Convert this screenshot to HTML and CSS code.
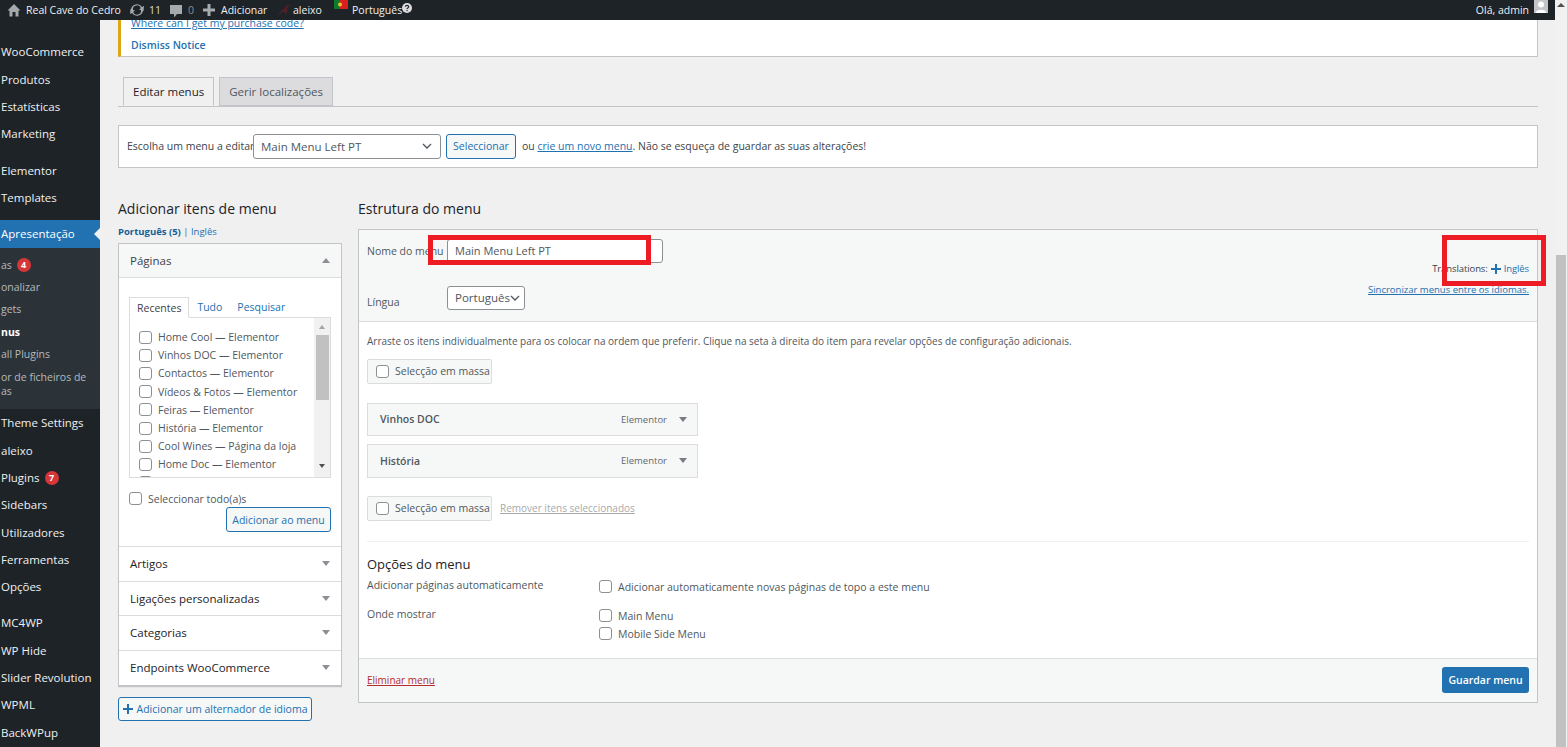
FILE: index.html
```html
<!DOCTYPE html>
<html lang="pt">
<head>
<meta charset="utf-8">
<title>Menus</title>
<link rel="stylesheet" href="styles.css">
</head>
<body>
<div class="page">
  <div class="viewport">
    <header class="adminbar">
      <svg class="ab-home" viewBox="0 0 14 14"><path d="M7 1 L0.5 7.5 L2.5 7.5 L2.5 13.5 L5.5 13.5 L5.5 9 L8.5 9 L8.5 13.5 L11.5 13.5 L11.5 7.5 L13.5 7.5 Z" fill="#a7aaad"/></svg>
      <span class="ab-site">Real Cave do Cedro</span>
      <svg class="ab-upd" viewBox="0 0 14 14"><path d="M1 7 A6 6 0 0 1 12 4 L14 3 L13.5 8 L9 6.5 L10.8 5.3 A4 4 0 0 0 3 7 Z M13 7 A6 6 0 0 1 2 10 L0 11 L0.5 6 L5 7.5 L3.2 8.7 A4 4 0 0 0 11 7 Z" fill="#a7aaad"/></svg>
      <span class="ab-count">11</span>
      <svg class="ab-com" viewBox="0 0 14 14"><path d="M1 1 H13 V10 H8 L5 13.5 V10 H1 Z" fill="#a7aaad"/></svg>
      <span class="ab-zero">0</span>
      <svg class="ab-plus" viewBox="0 0 12 12"><path d="M4.5 0 H7.5 V4.5 H12 V7.5 H7.5 V12 H4.5 V7.5 H0 V4.5 H4.5 Z" fill="#a7aaad"/></svg>
      <span class="ab-add">Adicionar</span>
      <svg class="ab-logo" viewBox="0 0 14 12"><path d="M1 11 C4 9 8 4 11 1 C10 4 9 8 9 11 M4 7 H11 M11 1 C12 1 13 1 14 0" fill="none" stroke="#7c1f27" stroke-width="1"/></svg>
      <span class="ab-user">aleixo</span>
      <svg class="ab-flag" viewBox="0 0 14 9"><rect width="6" height="9" fill="#0a7a2c"/><rect x="6" width="8" height="9" fill="#d9201f"/><circle cx="6" cy="4.5" r="2" fill="#e8c22c"/></svg>
      <span class="ab-lang">Português</span>
      <svg class="ab-help" viewBox="0 0 10 10"><circle cx="5" cy="5" r="5" fill="#dcdcde"/><path d="M3.4 3.8 C3.4 2 6.7 2 6.7 3.8 C6.7 5 5 4.8 5 6.1" fill="none" stroke="#1d2327" stroke-width="1.2"/><rect x="4.4" y="6.9" width="1.2" height="1.2" fill="#1d2327"/></svg>
      <span class="ab-hello">Olá, admin</span>
      <svg class="ab-avatar" viewBox="0 0 14 13"><rect width="14" height="13" fill="#c3c4c7"/><circle cx="7" cy="4.5" r="3" fill="#fff"/><path d="M1.5 13 C2 8.5 12 8.5 12.5 13 Z" fill="#fff"/></svg>
    </header>

    <div class="workspace">
      <nav class="sidebar">
        <ul class="nav">
          <li>WooCommerce</li>
          <li>Produtos</li>
          <li>Estatísticas</li>
          <li class="sep">Marketing</li>
          <li>Elementor</li>
          <li class="sep">Templates</li>
          <li class="current">Apresentação</li>
        </ul>
        <ul class="subnav">
          <li class="sub-first">as <span class="badge">4</span></li>
          <li>onalizar</li>
          <li>gets</li>
          <li class="sub-on">nus</li>
          <li>all Plugins</li>
          <li>or de ficheiros de<br>as</li>
        </ul>
        <ul class="nav">
          <li>Theme Settings</li>
          <li>aleixo</li>
          <li>Plugins <span class="badge">7</span></li>
          <li>Sidebars</li>
          <li>Utilizadores</li>
          <li>Ferramentas</li>
          <li class="sep">Opções</li>
          <li>MC4WP</li>
          <li>WP Hide</li>
          <li>Slider Revolution</li>
          <li>WPML</li>
          <li>BackWPup</li>
        </ul>
      </nav>

      <main class="content">
        <section class="notice">
          <a class="notice-link">Where can I get my purchase code?</a>
          <a class="notice-dismiss">Dismiss Notice</a>
        </section>

        <div class="tabs">
          <span class="tab tab-on">Editar menus</span>
          <span class="tab">Gerir localizações</span>
        </div>

        <section class="manage">
          <span class="manage-label">Escolha um menu a editar:</span>
          <div class="select select-menu"><span>Main Menu Left PT</span><svg class="chev" viewBox="0 0 10 6"><path d="M1 1 L5 5 L9 1" fill="none" stroke="#50575e" stroke-width="1.3"/></svg></div>
          <span class="btn btn-select">Seleccionar</span>
          <span class="manage-after">ou <a class="link">crie um novo menu</a>. Não se esqueça de guardar as suas alterações!</span>
        </section>

        <div class="columns">
          <aside class="col-left">
            <h2 class="heading">Adicionar itens de menu</h2>
            <p class="lang-links"><b>Português (5)</b> | <a>Inglês</a></p>
            <div class="accordion">
              <div class="acc-head acc-open"><span>Páginas</span><i class="arrow-up"></i></div>
              <div class="acc-body">
                <div class="mini-tabs">
                  <span class="mini-tab mini-on">Recentes</span>
                  <span class="mini-tab">Tudo</span>
                  <span class="mini-tab">Pesquisar</span>
                </div>
                <div class="checklist">
                  <ul class="checks">
                    <li><input type="checkbox" class="cb">Home Cool — Elementor</li>
                    <li><input type="checkbox" class="cb">Vinhos DOC — Elementor</li>
                    <li><input type="checkbox" class="cb">Contactos — Elementor</li>
                    <li><input type="checkbox" class="cb">Vídeos &amp; Fotos — Elementor</li>
                    <li><input type="checkbox" class="cb">Feiras — Elementor</li>
                    <li><input type="checkbox" class="cb">História — Elementor</li>
                    <li><input type="checkbox" class="cb">Cool Wines — Página da loja</li>
                    <li><input type="checkbox" class="cb">Home Doc — Elementor</li>
                    <li><input type="checkbox" class="cb"></li>
                  </ul>
                  <div class="mini-scroll">
                    <i class="ms-up"></i>
                    <i class="ms-thumb"></i>
                    <i class="ms-down"></i>
                  </div>
                </div>
                <label class="select-all"><input type="checkbox" class="cb">Seleccionar todo(a)s</label>
                <div class="add-row"><span class="btn btn-add">Adicionar ao menu</span></div>
              </div>
              <div class="acc-head"><span>Artigos</span><i class="arrow-down"></i></div>
              <div class="acc-head"><span>Ligações personalizadas</span><i class="arrow-down"></i></div>
              <div class="acc-head"><span>Categorias</span><i class="arrow-down"></i></div>
              <div class="acc-head acc-last"><span>Endpoints WooCommerce</span><i class="arrow-down"></i></div>
            </div>
            <span class="btn btn-switcher"><svg class="plus" viewBox="0 0 10 10"><path d="M4 0 H6 V4 H10 V6 H6 V10 H4 V6 H0 V4 H4 Z" fill="#2271b1"/></svg>Adicionar um alternador de idioma</span>
          </aside>

          <section class="col-right">
            <h2 class="heading">Estrutura do menu</h2>
            <div class="panel">
              <div class="panel-head">
                <div class="head-fields">
                  <div class="field-row"><span class="field-label">Nome do menu</span><div class="name-input">Main Menu Left PT</div></div>
                  <div class="field-row field-lang"><span class="field-label field-label-lang">Língua</span><div class="select select-lang"><span>Português</span><svg class="chev" viewBox="0 0 10 6"><path d="M1 1 L5 5 L9 1" fill="none" stroke="#50575e" stroke-width="1.3"/></svg></div></div>
                </div>
                <div class="head-side">
                  <p class="translations">Translations: <svg class="plus" viewBox="0 0 10 10"><path d="M4 0 H6 V4 H10 V6 H6 V10 H4 V6 H0 V4 H4 Z" fill="#2271b1"/></svg> <a>Inglês</a></p>
                  <a class="link sync">Sincronizar menus entre os idiomas.</a>
                </div>
              </div>
              <div class="panel-body">
                <p class="hint">Arraste os itens individualmente para os colocar na ordem que preferir. Clique na seta à direita do item para revelar opções de configuração adicionais.</p>
                <label class="bulk"><input type="checkbox" class="cb">Selecção em massa</label>
                <div class="menu-item item-a"><b>Vinhos DOC</b><span class="item-type">Elementor</span><i class="arrow-down arrow-dark"></i></div>
                <div class="menu-item"><b>História</b><span class="item-type">Elementor</span><i class="arrow-down arrow-dark"></i></div>
                <div class="bulk-row">
                  <label class="bulk"><input type="checkbox" class="cb">Selecção em massa</label>
                  <a class="remove">Remover itens seleccionados</a>
                </div>
                <div class="options">
                  <h3 class="options-title">Opções do menu</h3>
                  <div class="opt-row">
                    <span class="opt-label">Adicionar páginas automaticamente</span>
                    <label class="opt-check"><input type="checkbox" class="cb">Adicionar automaticamente novas páginas de topo a este menu</label>
                  </div>
                  <div class="opt-row opt-row-2">
                    <span class="opt-label">Onde mostrar</span>
                    <div class="opt-stack">
                      <label class="opt-check"><input type="checkbox" class="cb">Main Menu</label>
                      <label class="opt-check"><input type="checkbox" class="cb">Mobile Side Menu</label>
                    </div>
                  </div>
                </div>
              </div>
              <div class="panel-foot">
                <a class="delete">Eliminar menu</a>
                <span class="btn-primary">Guardar menu</span>
              </div>
            </div>
          </section>
        </div>
      </main>
    </div>

    <div class="mark mark-name"></div>
    <div class="mark mark-trans"></div>
  </div>

  <div class="scrollbar">
    <i class="sb-up"></i>
    <i class="sb-thumb"></i>
  </div>
</div>
</body>
</html>
```

FILE: styles.css
```css
* { box-sizing: border-box; }
html, body { margin: 0; padding: 0; height: 100%; overflow: hidden; }
body { font-family: "Open Sans", "Noto Sans", sans-serif; font-size: 11px; color: #3c434a; background: #f0f0f1; }
ul { list-style: none; margin: 0; padding: 0; }
p, h2, h3 { margin: 0; }
a { color: #2271b1; }
.page { display: flex; width: 1567px; height: 747px; }
.viewport { position: relative; width: 1555px; height: 747px; display: flex; flex-direction: column; overflow: hidden; }

/* admin bar */
.adminbar { height: 20px; flex: none; background: #1d2327; color: #f0f0f1; display: flex; align-items: center; font-size: 10.5px; line-height: 20px; padding-left: 7px; position: relative; z-index: 2; }
.ab-home { width: 14px; height: 14px; }
.ab-site { margin-left: 5px; width: 104px; white-space: nowrap; }
.ab-upd { width: 14px; height: 14px; }
.ab-count { margin-left: 5px; width: 20px; color: #dcdcde; }
.ab-com { width: 14px; height: 14px; margin-top: 1px; }
.ab-zero { margin-left: 5px; width: 15px; color: #8c8f94; }
.ab-plus { width: 12px; height: 12px; }
.ab-add { margin-left: 6px; width: 57px; }
.ab-logo { width: 12px; height: 10px; }
.ab-user { margin-left: 3px; width: 41px; }
.ab-flag { width: 14px; height: 9px; align-self: flex-start; }
.ab-lang { margin-left: 4px; width: 50px; }
.ab-help { width: 10px; height: 10px; margin-bottom: 5px; }
.ab-hello { margin-left: auto; white-space: nowrap; }
.ab-avatar { width: 14px; height: 13px; margin: 0 7px 7px 5px; }

.workspace { flex: 1; display: flex; min-height: 0; }

/* sidebar */
.sidebar { width: 100px; flex: none; background: #1d2327; color: #f0f0f1; padding-top: 18.4px; overflow: hidden; font-size: 11.5px; }
.nav li { line-height: 27.3px; height: 27.3px; padding-left: 1px; white-space: nowrap; }
.nav li.sep { margin-bottom: 9px; }
.nav li.current { background: #2271b1; color: #fff; position: relative; height: 27.4px; }
.nav li.current::after { content: ""; position: absolute; right: 0; top: 8px; border: 6px solid transparent; border-right-color: #f0f0f1; border-left-width: 0; }
.subnav { background: #2c3338; color: #b4b9be; padding: 6px 0 7px; font-size: 10.5px; }
.subnav li { padding: 4px 0 4px 1px; line-height: 14.4px; }
.subnav .sub-on { color: #fff; font-weight: 700; }
.badge { display: inline-block; width: 14px; height: 14px; border-radius: 50%; background: #d63638; color: #fff; font-size: 9px; line-height: 14px; text-align: center; font-weight: 700; margin-left: 2px; vertical-align: 1px; }

/* main */
.content { flex: 1; min-width: 0; padding: 0 17px 0 18px; font-size: 10.5px; }
.notice { height: 36.5px; background: #fff; border: 1px solid #c3c4c7; border-top: 0; border-left: 3px solid #dba617; padding-left: 10px; display: flex; flex-direction: column; overflow: hidden; }
.notice-link { text-decoration: underline; line-height: 14px; margin-top: -4.5px; }
.notice-dismiss { font-weight: 600; margin-top: 8px; line-height: 14px; }

.tabs { margin-top: 20.5px; height: 29.5px; border-bottom: 1px solid #c3c4c7; padding-left: 5px; display: flex; gap: 5px; }
.tab { height: 29px; padding: 0 9px; border: 1px solid #c3c4c7; background: #dcdcde; color: #50575e; line-height: 27px; font-size: 11.5px; font-weight: 500; }
.tab-on { background: #f0f0f1; color: #1d2327; border-bottom-color: #f0f0f1; }

.manage { margin-top: 18px; height: 43px; background: #fff; border: 1px solid #c3c4c7; display: flex; align-items: center; padding-left: 8px; }
.manage-label { width: 126px; white-space: nowrap; }
.select { background: #fff; border: 1px solid #8c8f94; border-radius: 3px; display: flex; align-items: center; justify-content: space-between; color: #50575e; font-size: 11.5px; }
.select-menu { width: 188px; height: 25px; padding: 0 8px 0 7px; }
.chev { width: 10px; height: 6px; flex: none; }
.btn { border: 1px solid #2271b1; border-radius: 3px; background: #f6f7f7; color: #2271b1; display: inline-flex; align-items: center; justify-content: center; white-space: nowrap; }
.btn-select { margin-left: 5px; width: 70px; height: 25px; }
.manage-after { margin-left: 6px; white-space: nowrap; }
.link { text-decoration: underline; }

.columns { display: flex; margin-top: 31px; gap: 16px; }
.col-left { width: 224px; flex: none; }
.col-right { flex: 1; min-width: 0; }
.heading { font-size: 14px; font-weight: 500; color: #1d2327; line-height: 20px; height: 20px; }

.lang-links { margin-top: 6px; line-height: 14px; font-size: 9.5px; color: #50575e; }
.lang-links b { color: #135e96; font-weight: 700; }
.accordion { margin-top: 4px; border: 1px solid #c3c4c7; background: #fff; box-shadow: 0 1px 1px rgba(0,0,0,.04); }
.acc-head { height: 34.5px; padding: 0 11px 0 11px; display: flex; align-items: center; justify-content: space-between; font-size: 11.5px; font-weight: 500; color: #1d2327; border-bottom: 1px solid #dcdcde; }
.acc-open { background: #f6f7f7; color: #3c434a; }
.acc-last { border-bottom: 0; height: 36px; border-bottom: 2px solid #c3c4c7; margin-bottom: -1px; }
.arrow-up { width: 0; height: 0; border: 4px solid transparent; border-top: 0; border-bottom: 5px solid #8c8f94; margin-right: 0; }
.arrow-down { width: 0; height: 0; border: 4px solid transparent; border-bottom: 0; border-top: 5px solid #8c8f94; }
.arrow-dark { border-top-color: #787c82; }
.acc-body { padding: 19px 10px 0; height: 269px; border-bottom: 1px solid #dcdcde; }
.mini-tabs { display: flex; height: 21px; position: relative; z-index: 1; }
.mini-tab { padding: 0 7px; line-height: 21px; color: #2271b1; font-size: 10.5px; margin-right: 1px; }
.mini-on { border: 1px solid #dcdcde; border-bottom: 1px solid #fff; color: #3c434a; line-height: 20px; background: #fff; }
.checklist { height: 161px; border: 1px solid #dcdcde; margin-top: -1px; display: flex; overflow: hidden; }
.checks { flex: 1; padding: 10px 0 0 9px; }
.checks li { display: flex; align-items: center; height: 18.2px; white-space: nowrap; color: #50575e; }
.cb { appearance: none; -webkit-appearance: none; width: 13px; height: 13px; margin: 0 6px 0 0; border: 1px solid #8c8f94; border-radius: 3px; background: #fff; flex: none; }
.mini-scroll { width: 16px; background: #f1f1f1; position: relative; display: flex; flex-direction: column; align-items: center; flex: none; }
.ms-up { width: 0; height: 0; margin-top: 7px; border: 3.5px solid transparent; border-top: 0; border-bottom: 4px solid #a3a3a3; }
.ms-thumb { width: 13px; height: 65px; margin-top: 6px; background: #c1c1c1; }
.ms-down { width: 0; height: 0; margin-top: 64px; border: 3.5px solid transparent; border-bottom: 0; border-top: 4px solid #505050; }
.select-all { display: flex; align-items: center; margin-top: 14px; height: 13px; color: #50575e; }
.add-row { display: flex; justify-content: flex-end; margin-top: 2px; }
.btn-add { width: 105px; height: 25px; }
.btn-switcher { margin-top: 10px; width: 194px; height: 24px; gap: 4px; }
.plus { width: 10px; height: 10px; flex: none; }

/* right panel */
.panel { margin-top: 10px; border: 1px solid #c3c4c7; background: #fff; }
.panel-head { height: 92px; background: #f6f7f7; border-bottom: 1px solid #dcdcde; display: flex; justify-content: space-between; padding: 9px 8px 0 8px; }
.field-row { display: flex; align-items: center; height: 24px; }
.field-label { width: 80px; white-space: nowrap; color: #50575e; }
.field-label-lang { padding-top: 8px; }
.name-input { width: 216px; height: 24px; border: 1px solid #8c8f94; border-radius: 3px; background: #fff; padding-left: 7px; line-height: 22px; color: #50575e; font-size: 11px; }
.field-lang { margin-top: 23px; }
.select-lang { width: 78px; height: 24px; padding: 0 4px 0 7px; }
.head-side { display: flex; flex-direction: column; align-items: flex-end; padding-top: 23px; }
.translations { line-height: 14px; font-size: 9.5px; display: flex; align-items: center; gap: 3px; letter-spacing: -.1px; }
.sync { margin-top: 7px; line-height: 14px; font-size: 9.5px; white-space: nowrap; }
.panel-body { padding: 12px 8px 0 8px; }
.hint { line-height: 14px; white-space: nowrap; font-size: 10px; color: #50575e; }
.bulk { width: 125px; height: 25px; border: 1px solid #dcdcde; border-radius: 2px; background: #f6f7f7; display: flex; align-items: center; padding-left: 8px; color: #50575e; white-space: nowrap; flex: none; }
.panel-body > .bulk { margin-top: 11px; }
.menu-item { width: 331px; height: 34px; border: 1px solid #dcdcde; background: #f6f7f7; display: flex; align-items: center; padding: 0 10px 0 12px; margin-top: 8px; }
.item-a { margin-top: 19px; height: 33px; }
.menu-item b { flex: 1; font-weight: 600; color: #50575e; }
.item-type { color: #646970; font-size: 9.5px; margin-right: 12px; }
.bulk-row { display: flex; align-items: center; margin-top: 18px; gap: 8px; }
.remove { color: #a7aaad; text-decoration: underline; font-size: 10px; white-space: nowrap; }
.options { margin-top: 20px; border-top: 1px solid #f0f0f1; padding: 12px 0 15px; }
.options-title { font-size: 13px; font-weight: 500; color: #1d2327; line-height: 20px; }
.opt-row { display: flex; align-items: flex-start; margin-top: 4px; }
.opt-row-2 { margin-top: 11px; }
.opt-label { width: 232px; flex: none; color: #50575e; line-height: 14px; }
.opt-check { display: flex; align-items: center; height: 18px; color: #50575e; white-space: nowrap; }
.opt-stack { display: flex; flex-direction: column; }
.panel-foot { height: 44px; background: #f6f7f7; border-top: 1px solid #dcdcde; display: flex; align-items: center; justify-content: space-between; padding: 0 8px; }
.delete { color: #b32d2e; text-decoration: underline; font-size: 10px; }
.btn-primary { width: 87px; height: 26px; background: #2271b1; color: #fff; border-radius: 3px; display: flex; align-items: center; justify-content: center; font-weight: 600; }

/* annotation rectangles on top of the screenshot */
.mark { position: absolute; border: 5px solid #ed1c24; pointer-events: none; z-index: 3; }
.mark-name { left: 428px; top: 235px; width: 223px; height: 30px; }
.mark-trans { left: 1442px; top: 235px; width: 104px; height: 51px; }

/* page scrollbar */
.scrollbar { width: 12px; height: 747px; background: #f1f1f1; display: flex; flex-direction: column; align-items: center; flex: none; }
.sb-up { width: 0; height: 0; margin-top: 3px; border: 4px solid transparent; border-top: 0; border-bottom: 4px solid #505050; }
.sb-thumb { width: 10px; height: 492px; margin-top: 248px; background: #c1c1c1; }
```
